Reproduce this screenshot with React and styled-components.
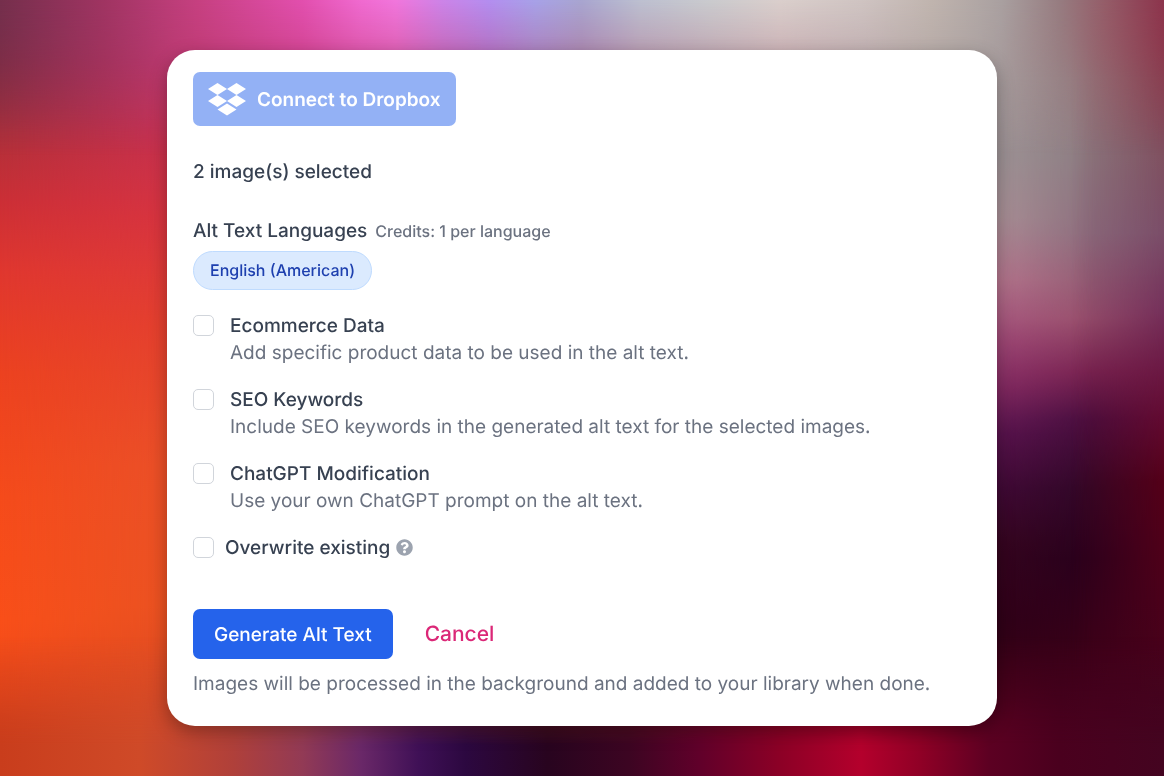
import { useState } from "react";
import styled, { createGlobalStyle } from "styled-components";

const options = [
  {
    id: "ecommerce",
    title: "Ecommerce Data",
    text: "Add specific product data to be used in the alt text.",
  },
  {
    id: "seo",
    title: "SEO Keywords",
    text: "Include SEO keywords in the generated alt text for the selected images.",
  },
  {
    id: "chatgpt",
    title: "ChatGPT Modification",
    text: "Use your own ChatGPT prompt on the alt text.",
  },
];

export default function App() {
  const [checked, setChecked] = useState({});

  function toggle(id) {
    setChecked({ ...checked, [id]: !checked[id] });
  }

  return (
    <Page>
      <GlobalStyle />
      <Backdrop />
      <Card>
        <DropboxButton type="button">
          <DropboxLogo />
          Connect to Dropbox
        </DropboxButton>
        <Selected>2 image(s) selected</Selected>
        <Languages>
          <h2>Alt Text Languages</h2>
          <small>Credits: 1 per language</small>
        </Languages>
        <Pill type="button">English (American)</Pill>
        <Options>
          {options.map((o) => (
            <Option key={o.id}>
              <Checkbox id={o.id} checked={!!checked[o.id]} onChange={() => toggle(o.id)} />
              <div>
                <label htmlFor={o.id}>{o.title}</label>
                <p>{o.text}</p>
              </div>
            </Option>
          ))}
          <Option $tight>
            <Checkbox
              id="overwrite"
              checked={!!checked.overwrite}
              onChange={() => toggle("overwrite")}
            />
            <label htmlFor="overwrite">Overwrite existing</label>
            <HelpIcon />
          </Option>
        </Options>
        <Actions>
          <Generate type="button">Generate Alt Text</Generate>
          <Cancel type="button">Cancel</Cancel>
        </Actions>
        <Note>Images will be processed in the background and added to your library when done.</Note>
      </Card>
    </Page>
  );
}

function Backdrop() {
  return (
    <Washes aria-hidden="true">
      <Wash $tones="to bottom, #752f4c 0%, #8c2c40 8%, #b0303a 17%, #cc2f36 26%, #e0372f 35%, #ec4220 48%, #f54b1b 64%, #f94f19 80%, #ee4a1b 90%, #c93d1c 100%" />
      <Wash
        $tones="to bottom, #b83a70 0%, #b83363 8%, #c63050 17%, #d83440 28%, #e4402f 42%, #ea5028 60%, #ea5222 78%, #dc4a22 90%, #cf4a28 100%"
        $mask="to right, transparent 0%, #000 15%"
      />
      <Wash
        $tones="to bottom, #aaa0a0 0%, #a69b9c 10%, #a09799 20%, #ac9499 28%, #b87890 36%, #a04878 44%, #862c65 50%, #5c1450 56%, #430a38 63%, #380620 70%, #2f0018 80%, #350014 90%, #5a0020 100%"
        $mask="to right, transparent 40%, #000 80%"
      />
      <Wash
        $tones="to bottom, #a06a74 0%, #948083 10%, #8c7a80 20%, #8c6c7c 30%, #98506c 41%, #782350 48%, #480e3e 54%, #300726 63%, #28001c 72%, #3a0018 84%, #460020 100%"
        $mask="to right, transparent 84%, #000 94%"
      />
      <Wash
        $tones="to bottom, #963a4a 0%, #864855 10%, #7f5060 20%, #7a4d68 30%, #75305a 40%, #6c1a45 47%, #620a30 54%, #540018 62%, #4b001a 77%, #40041c 100%"
        $mask="to right, transparent 92%, #000 100%"
      />
      <Wash
        $tones="to right, #752f4c 0%, #a03462 9%, #c64080 17%, #e24fae 26%, #f06ad0 31%, #f176dc 34%, #cc84e8 38%, #b38ef0 42%, #a7a2e8 46%, #a8a6d0 50%, #bcc0d0 55%, #cacbce 61%, #dacfcc 67%, #cfc4c2 74%, #c0b4ae 80%, #a9a0a0 86%, #967c80 91%, #945c68 95%, #8c344c 100%"
        $mask="to bottom, #000 0%, transparent 20%"
      />
      <Wash
        $tones="to right, #c93d1c 0%, #cf4a28 12%, #b0403a 20%, #923a55 26%, #6a2868 31%, #3f1056 36%, #2c0840 40%, #28041f 47%, #3c0522 54%, #60002a 60%, #8c0026 67%, #b4002c 74%, #900026 79%, #5c0022 85%, #4a001e 91%, #440420 100%"
        $mask="to bottom, transparent 82%, #000 96%"
      />
    </Washes>
  );
}

function Checkbox(props) {
  return <Box type="checkbox" {...props} />;
}

function DropboxLogo() {
  return (
    <svg width="38" height="33" viewBox="0 0 38 33" fill="currentColor" aria-hidden="true">
      <path d="M9.5 0 19 6 9.5 12 0 6zM28.5 0 38 6l-9.500 6L19 6zM9.500 12 19 18l-9.500 6L0 18zM28.500 12 38 18l-9.500 6L19 18zM19 20.500l9.500 6L19 32.500l-9.500-6z" />
    </svg>
  );
}

function HelpIcon() {
  return (
    <svg width="17" height="17" viewBox="0 0 512 512" fill="#9ca3af" role="img" aria-label="Help">
      <path d="M504 256c0 136.997-111.043 248-248 248S8 392.997 8 256C8 119.083 119.043 8 256 8s248 111.083 248 248zM262.655 90c-54.497 0-89.255 22.957-116.549 63.758-3.536 5.286-2.353 12.415 2.715 16.258l34.699 26.310c5.205 3.947 12.621 3.008 16.665-2.122 17.864-22.658 30.113-35.797 57.303-35.797 20.429 0 45.698 13.148 45.698 32.958 0 14.976-12.363 22.667-32.534 33.976C247.128 238.528 216 254.941 216 296v4c0 6.627 5.373 12 12 12h56c6.627 0 12-5.373 12-12v-1.333c0-28.462 83.186-29.647 83.186-106.667 0-58.002-60.165-102-116.531-102zM256 338c-25.365 0-46 20.635-46 46 0 25.364 20.635 46 46 46s46-20.636 46-46c0-25.365-20.635-46-46-46z" />
    </svg>
  );
}

const GlobalStyle = createGlobalStyle`
  * {
    box-sizing: border-box;
  }

  body {
    margin: 0;
    font-family: Inter, "Liberation Sans", sans-serif;
    font-size: 19px;
    line-height: 27px;
    text-rendering: geometricPrecision;
    color: #374151;
  }

  h2, p {
    margin: 0;
  }

  button {
    font: inherit;
    text-rendering: inherit;
    border: none;
    cursor: pointer;
  }
`;

const Page = styled.main`
  min-height: 100vh;
  padding: 24px;
  display: flex;
  justify-content: center;
  align-items: center;
`;

const Washes = styled.div`
  position: fixed;
  inset: 0;
  z-index: -1;
  display: grid;
`;

const Wash = styled.div`
  grid-area: 1 / 1;
  background: linear-gradient(${(p) => p.$tones});
  mask-image: ${(p) => (p.$mask ? `linear-gradient(${p.$mask})` : "none")};
`;

const Card = styled.section`
  width: 100%;
  max-width: 830px;
  padding: 22px 26px 29px;
  background-color: #fff;
  border-radius: 28px;
  box-shadow: 0 6px 18px rgba(0, 0, 0, 0.3);
  display: flex;
  flex-direction: column;
  align-items: flex-start;
`;

const DropboxButton = styled.button`
  height: 54px;
  padding: 0 15px;
  display: flex;
  align-items: center;
  gap: 11px;
  color: #fff;
  background-color: #93b1f5;
  border-radius: 7px;

  && {
    font-weight: 600;
  }
`;

const Selected = styled.p`
  margin-top: 32px;
  font-weight: 500;
`;

const Languages = styled.div`
  margin-top: 32px;
  display: flex;
  align-items: baseline;
  gap: 8px;

  h2 {
    font-size: 19px;
    font-weight: 500;
  }
  small {
    font-size: 16px;
    font-weight: 500;
    color: #6b7280;
  }
`;

const Pill = styled.button`
  margin-top: 6px;
  height: 39px;
  padding: 0 16px;
  color: #1e40af;
  background-color: #dbeafe;
  border: 1px solid #bfdbfe;
  border-radius: 20px;

  && {
    font-size: 16px;
    font-weight: 500;
  }
`;

const Options = styled.div`
  margin-top: 22px;
  display: flex;
  flex-direction: column;
  gap: 20px;
`;

const Option = styled.div`
  display: flex;
  align-items: ${(p) => (p.$tight ? "center" : "flex-start")};

  label {
    margin-left: ${(p) => (p.$tight ? "11px" : "16px")};
    font-weight: 500;
  }
  p {
    margin-left: 16px;
    color: #6b7280;
  }
  svg {
    margin-left: 6px;
  }
`;

const Box = styled.input`
  appearance: none;
  flex-shrink: 0;
  width: 21px;
  height: 21px;
  margin: 3px 0;
  background-color: #fff;
  border: 1px solid #d1d5db;
  border-radius: 5px;

  &:checked {
    background-color: #2563eb;
    border-color: #2563eb;
  }
`;

const Actions = styled.div`
  margin-top: 48px;
  display: flex;
  align-items: center;
  gap: 32px;
`;

const Generate = styled.button`
  height: 50px;
  padding: 0 21px;
  color: #fff;
  background-color: #2563eb;
  border-radius: 7px;

  && {
    font-weight: 500;
  }
`;

const Cancel = styled.button`
  padding: 0;
  color: #db2777;
  background: none;

  && {
    font-size: 21px;
    font-weight: 500;
  }
`;

const Note = styled.p`
  margin-top: 11px;
  color: #6b7280;
`;
